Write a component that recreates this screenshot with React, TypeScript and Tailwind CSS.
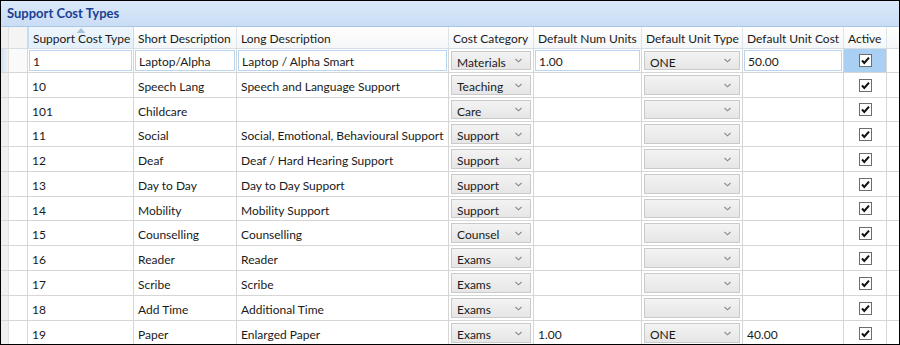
import React from 'react';

type Row = {
  code: string;
  short: string;
  long: string;
  category: string;
  units: string;
  unitType: string;
  unitCost: string;
};

const rows: Row[] = [
  { code: '1', short: 'Laptop/Alpha', long: 'Laptop / Alpha Smart', category: 'Materials', units: '1.00', unitType: 'ONE', unitCost: '50.00' },
  { code: '10', short: 'Speech Lang', long: 'Speech and Language Support', category: 'Teaching', units: '', unitType: '', unitCost: '' },
  { code: '101', short: 'Childcare', long: '', category: 'Care', units: '', unitType: '', unitCost: '' },
  { code: '11', short: 'Social', long: 'Social, Emotional, Behavioural Support', category: 'Support', units: '', unitType: '', unitCost: '' },
  { code: '12', short: 'Deaf', long: 'Deaf / Hard Hearing Support', category: 'Support', units: '', unitType: '', unitCost: '' },
  { code: '13', short: 'Day to Day', long: 'Day to Day Support', category: 'Support', units: '', unitType: '', unitCost: '' },
  { code: '14', short: 'Mobility', long: 'Mobility Support', category: 'Support', units: '', unitType: '', unitCost: '' },
  { code: '15', short: 'Counselling', long: 'Counselling', category: 'Counsel', units: '', unitType: '', unitCost: '' },
  { code: '16', short: 'Reader', long: 'Reader', category: 'Exams', units: '', unitType: '', unitCost: '' },
  { code: '17', short: 'Scribe', long: 'Scribe', category: 'Exams', units: '', unitType: '', unitCost: '' },
  { code: '18', short: 'Add Time', long: 'Additional Time', category: 'Exams', units: '', unitType: '', unitCost: '' },
  { code: '19', short: 'Paper', long: 'Enlarged Paper', category: 'Exams', units: '1.00', unitType: 'ONE', unitCost: '40.00' },
];

const heights = ['h-[24px]', 'h-[25px]', 'h-[24px]', 'h-[25px]', 'h-[25px]', 'h-[25px]', 'h-[24px]', 'h-[25px]', 'h-[25px]', 'h-[25px]', 'h-[25px]', 'h-[25px]'];

const cols = 'grid grid-cols-[8px_19px_106px_103px_212px_85px_108px_101px_101px_43px_1fr]';

function Chevron() {
  return (
    <svg width="7" height="5" viewBox="0 0 7 5" className="shrink-0">
      <polyline points="0.5,1 3.5,3.8 6.5,1" fill="none" stroke="#8a8a8a" strokeWidth="1.1" />
    </svg>
  );
}

function Combo({ value }: { value: string }) {
  return (
    <div className="mx-[2px] my-[2px] flex flex-1 self-stretch items-center justify-between border border-[#cacaca] bg-gradient-to-b from-[#f3f3f3] to-[#e6e6e6] pl-[5px] pr-[8px]">
      <span className="pt-[4px]">{value}</span>
      <Chevron />
    </div>
  );
}

function Check() {
  return (
    <svg width="13" height="13" viewBox="0 0 13 13">
      <rect x="0.5" y="0.5" width="12" height="12" fill="#fff" stroke="#6d6d6d" />
      <polyline points="3,6.5 5.3,9 10,3.6" fill="none" stroke="#111" strokeWidth="2" />
    </svg>
  );
}

function Header({ label, sorted }: { label: string; sorted?: boolean }) {
  return (
    <div
      className={`relative flex items-center border-r border-[#dde4ea] pl-[4px] pt-[3px] whitespace-nowrap ${
        sorted ? 'bg-gradient-to-b from-[#eef6fc] to-[#e3f0fa] border-l border-l-[#c3dcef] border-r-[#c3dcef]' : ''
      }`}
    >
      {sorted && (
        <svg width="9" height="5" viewBox="0 0 9 5" className="absolute left-1/2 top-[1px] -translate-x-1/2">
          <polygon points="0,5 4.5,0 9,5" fill="#a9c3d8" />
        </svg>
      )}
      {label}
    </div>
  );
}

export default function App() {
  return (
    <div className="h-[345px] w-[900px] overflow-hidden border border-black bg-white text-[12px] text-[#1a1a1a] font-['Lato','Open_Sans',sans-serif]">
      <div className="flex h-[26px] items-center border-b border-[#a9c6e4] bg-gradient-to-b from-[#dbe9f9] to-[#c9ddf5] pl-[6px] text-[13px] font-bold text-[#1d3f93]">
        Support Cost Types
      </div>

      <div className={`${cols} h-[22px] border-b border-[#d4dde4] bg-gradient-to-b from-[#ffffff] to-[#f4f6f8]`}>
        <div className="border-r border-[#e2e2e2] bg-[#f0f0f0]" />
        <div className="border-r border-[#d8d8d8] bg-[#f4f4f4]" />
        <Header label="Support Cost Type" sorted />
        <Header label="Short Description" />
        <Header label="Long Description" />
        <Header label="Cost Category" />
        <Header label="Default Num Units" />
        <Header label="Default Unit Type" />
        <Header label="Default Unit Cost" />
        <Header label="Active" />
        <div />
      </div>

      {rows.map((r, i) => {
        const sel = i === 0;
        const cell = 'flex items-center border-r border-[#d6d6d6] overflow-hidden whitespace-nowrap';
        const edit = sel
          ? 'm-[1px] flex-1 self-stretch flex items-center border border-[#b9d6f0] bg-white pl-[3px] pt-[3px]'
          : 'pl-[4px] pt-[4px]';
        return (
          <div key={r.code} className={`${cols} ${heights[i]} border-b border-[#d6d6d6]`}>
            <div className={`border-r border-[#e2e2e2] ${sel ? 'bg-gradient-to-r from-[#cfe3f5] to-[#f0f0f0]' : 'bg-[#f0f0f0]'}`} />
            <div className={`border-r border-[#d8d8d8] ${sel ? 'bg-[#fafafa]' : 'bg-white'}`} />
            <div className={cell}>
              <span className={edit}>{r.code}</span>
            </div>
            <div className={cell}>
              <span className={edit}>{r.short}</span>
            </div>
            <div className={cell}>
              <span className={edit}>{r.long}</span>
            </div>
            <div className={cell}>
              <Combo value={r.category} />
            </div>
            <div className={cell}>
              <span className={edit}>{r.units}</span>
            </div>
            <div className={cell}>
              <Combo value={r.unitType} />
            </div>
            <div className={cell}>
              <span className={edit}>{r.unitCost}</span>
            </div>
            <div className={`${cell} justify-center ${sel ? 'bg-[#a9d0f2]' : ''}`}>
              <Check />
            </div>
            <div />
          </div>
        );
      })}
    </div>
  );
}
